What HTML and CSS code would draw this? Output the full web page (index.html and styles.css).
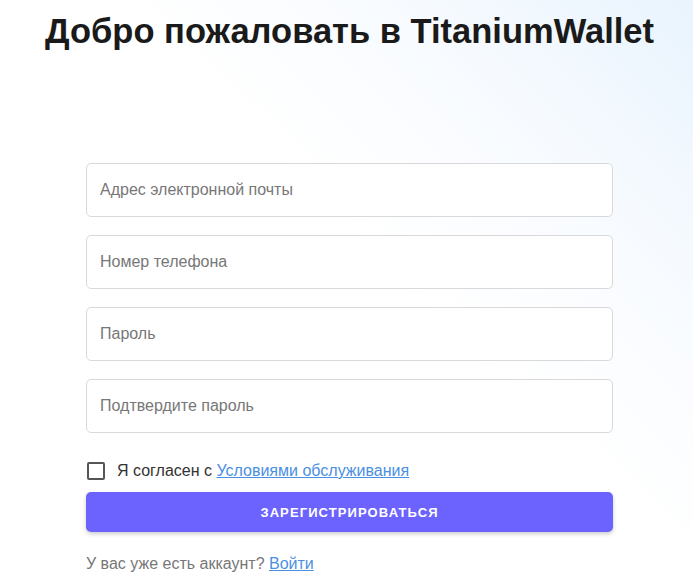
FILE: index.html
```html
<!DOCTYPE html>
<html lang="ru">
<head>
    <meta charset="UTF-8">
    <meta name="viewport" content="width=device-width, initial-scale=1.0">
    <title>TitaniumWallet - Регистрация</title>
    <link rel="stylesheet" href="styles.css">
</head>
<body>
    <div class="page">
        <h1 class="title">Добро пожаловать в TitaniumWallet</h1>

        <!-- Registration form -->
        <form class="register-form">
            <input type="email" class="field" placeholder="Адрес электронной почты">
            <input type="tel" class="field" placeholder="Номер телефона">
            <input type="password" class="field" placeholder="Пароль">
            <input type="password" class="field" placeholder="Подтвердите пароль">

            <label class="terms">
                <input type="checkbox" class="terms-check">
                <span>Я согласен с <a href="#">Условиями обслуживания</a></span>
            </label>

            <button type="submit" class="submit-btn">Зарегистрироваться</button>

            <p class="login-hint">У вас уже есть аккаунт? <a href="#">Войти</a></p>
        </form>
    </div>
</body>
</html>
```

FILE: styles.css
```css
/* General Reset */
* {
    margin: 0;
    padding: 0;
    box-sizing: border-box;
}

body {
    font-family: 'Liberation Sans', Arial, sans-serif;
    color: #222;
    min-height: 100vh;
    background: linear-gradient(225deg, #e9f4fd 0%, #f8fbff 25%, #ffffff 45%);
}

.page {
    padding: 0 0 0 6px;
}

/* Title */
.title {
    font-size: 34.5px;
    font-weight: 700;
    color: #1a1a1a;
    text-align: center;
    padding-top: 9px;
    line-height: 44px;
}

/* Form */
.register-form {
    width: 527px;
    margin: 110px auto 0;
    display: flex;
    flex-direction: column;
    gap: 18px;
}

.field {
    height: 54px;
    padding: 0 13px;
    font-family: inherit;
    font-size: 16px;
    color: #333;
    background: #fff;
    border: 1px solid #d9d9d9;
    border-radius: 5px;
    outline: none;
}

.field::placeholder {
    color: #777;
}

.terms {
    display: flex;
    align-items: center;
    gap: 12px;
    font-size: 16px;
    color: #333;
    margin-top: 11px;
    padding-left: 1px;
}

.terms-check {
    appearance: none;
    width: 18px;
    height: 18px;
    border: 2px solid #555;
    border-radius: 2px;
    background: #fff;
}

.terms a,
.login-hint a {
    color: #4a90e2;
    text-decoration: underline;
}

.submit-btn {
    height: 40px;
    margin-top: -6px;
    background-color: #6c63ff;
    color: #fff;
    border: none;
    border-radius: 5px;
    font-family: inherit;
    font-size: 13px;
    font-weight: 700;
    letter-spacing: 1.1px;
    text-transform: uppercase;
    box-shadow: 0 2px 4px rgba(0, 0, 0, 0.2);
    cursor: pointer;
}

.login-hint {
    font-size: 16px;
    color: #777;
    margin-top: 5px;
}
```
